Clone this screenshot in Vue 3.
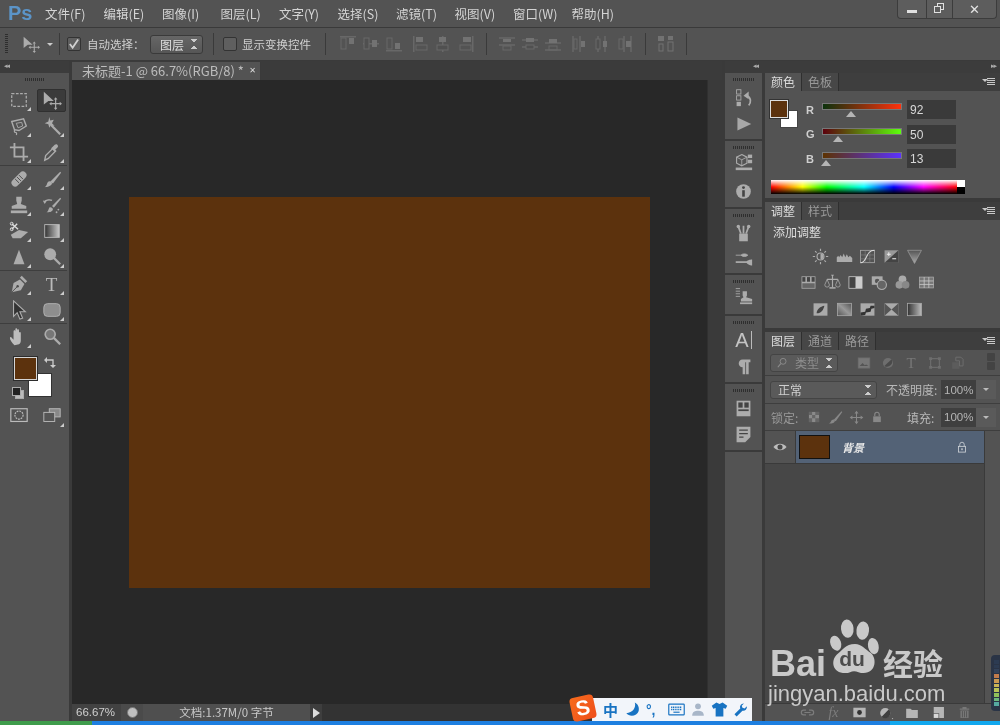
<script setup>
import { h } from 'vue'

const c = '#acacac'
const d = '#4a4a4a'
const icons = {
  marquee: `<rect x="3" y="4" width="16" height="14" fill="none" stroke="${c}" stroke-width="1.4" stroke-dasharray="3 1.6"/>`,
  move: `<path d="M2 2v14l5-4 6 0z" fill="${c}"/><path d="M15 10v10M10 15h10" stroke="${c}" stroke-width="1.3"/><path d="M15 8l2 2.5h-4zM15 22l2-2.5h-4zM8 15l2.5-2v4zM22 15l-2.5-2v4z" fill="${c}"/>`,
  lasso: `<path d="M3 6l13-3 3 8-8 5-5-1z" fill="none" stroke="${c}" stroke-width="1.6"/><path d="M8 8l6-1 1 4-5 2z" fill="none" stroke="${c}"/><path d="M7 15c-2 1-1 3 0 3s2 1 1 3" fill="none" stroke="${c}" stroke-width="1.3"/>`,
  wand: `<path d="M10 10l10 10" stroke="${c}" stroke-width="2.4"/><path d="M8 1l1 4 4-1-2 4 3 3-4-1-2 3-1-4-4-1 4-2z" fill="${c}"/>`,
  crop: `<path d="M6 1v15h15M1 6h15v15" fill="none" stroke="${c}" stroke-width="2"/>`,
  dropper: `<path d="M3 20l1-5 8-8 3 3-8 8z" fill="none" stroke="${c}" stroke-width="1.5"/><path d="M11 6l3-3c2-2 5 1 3 3l-3 3 1 1-1 1-4-4 1-1z" fill="${c}"/>`,
  heal: `<g transform="rotate(-45 11 11)"><rect x="1" y="7" width="20" height="8" rx="4" fill="${c}"/><path d="M8 8v6M11 8v6M14 8v6" stroke="${d}"/></g>`,
  brush: `<path d="M9 14L20 3l1 1L12 16z" fill="${c}"/><path d="M3 20c3 0 7-1 8-4 0-2-3-3-4-2-2 1-1 4-4 6z" fill="${c}"/>`,
  stamp: `<path d="M8 2h6v4l-1 4 6 2v3H3v-3l6-2-1-4z" fill="${c}"/><rect x="2" y="17" width="18" height="3" fill="${c}"/>`,
  hbrush: `<path d="M11 12L20 3l1 1-8 10z" fill="${c}"/><path d="M5 19c3 0 6 0 7-3 0-2-3-3-4-2-1 2-1 4-3 5z" fill="${c}"/><path d="M2 8c3-3 7-3 9-2" fill="none" stroke="${c}" stroke-width="1.5"/><path d="M1 6l2 4 2-3z" fill="${c}"/><circle cx="18" cy="16" r="1" fill="${c}"/><circle cx="16" cy="19" r="1" fill="${c}"/>`,
  eraser: `<path d="M2 15l9-5 10 2-8 7H4z" fill="${c}"/><path d="M3 3l7 6M9 3L3 9" stroke="#ddd" stroke-width="1.5"/><circle cx="3" cy="3" r="1.6" fill="none" stroke="#ddd"/><circle cx="3" cy="9" r="1.6" fill="none" stroke="#ddd"/>`,
  gradient: `<defs><linearGradient id="gr"><stop offset="0" stop-color="#333"/><stop offset="1" stop-color="#c8c8c8"/></linearGradient></defs><rect x="3" y="4" width="16" height="14" fill="url(#gr)" stroke="#bbb"/>`,
  blur: `<path d="M11 3l6 16H5z" fill="${c}"/>`,
  dodge: `<circle cx="9" cy="8" r="6.5" fill="${c}"/><path d="M13 12l7 7" stroke="${c}" stroke-width="2.5"/>`,
  pen: `<path d="M3 20l2-10 7-4 5 5-4 7z" fill="${c}"/><path d="M12 4l2-2 6 6-2 2z" fill="${c}"/><path d="M3 20l6-6" stroke="${d}"/><circle cx="9.5" cy="13.5" r="1.3" fill="${d}"/>`,
  arrow: `<path d="M5 1v17l4-4 3 7 3-1-3-7h6z" fill="#333" stroke="${c}" stroke-width="1.2"/>`,
  round: `<rect x="2" y="4" width="18" height="14" rx="4" fill="#8e8e8e" stroke="#b4b4b4"/>`,
  hand: `<path d="M6 20c-3-3-5-6-5-8s2-1 3 1l1 1V5c0-2 2-2 2 0v4-6c0-2 2-2 2 0v6-5c0-2 2-2 2 0v6-3c0-2 2-2 2 0v8c0 2-1 3-2 4z" fill="#bcbcbc"/>`,
  zoom: `<circle cx="9" cy="8" r="5.5" fill="#777" stroke="${c}" stroke-width="1.8"/><path d="M13 12l7 7" stroke="${c}" stroke-width="2.6"/>`,
  qmask: `<rect x="2" y="3" width="18" height="14" fill="none" stroke="#bbb" stroke-width="1.3"/><circle cx="11" cy="10" r="4.5" fill="none" stroke="#bbb" stroke-width="1.3" stroke-dasharray="2 1"/>`,
  screen: `<rect x="8" y="3" width="12" height="9" fill="#888" stroke="#bbb"/><rect x="2" y="7" width="12" height="10" fill="#555" stroke="#bbb"/>`,
  history: `<rect x="3" y="2" width="5" height="5" fill="none" stroke="${c}"/><rect x="3" y="9" width="5" height="5" fill="none" stroke="${c}"/><rect x="3" y="16" width="5" height="5" fill="${c}"/><path d="M17 20c3-3 3-9-2-11" fill="none" stroke="${c}" stroke-width="2"/><path d="M11 9l6-5v9z" fill="${c}"/>`,
  play: `<path d="M4 4l16 7.500L4 19z" fill="#a8a8a8"/>`,
  cube3d: `<path d="M9 3l6 3v7l-6 3-6-3V6z" fill="none" stroke="${c}" stroke-width="1.3"/><path d="M3 6l6 3 6-3M9 9v7" stroke="${c}" fill="none"/><rect x="16" y="3" width="5" height="4" fill="${c}"/><rect x="16" y="9" width="5" height="4" fill="${c}"/><rect x="2" y="18" width="19" height="3" fill="${c}"/>`,
  info: `<circle cx="11" cy="11" r="8.500" fill="${c}"/><circle cx="11" cy="6.500" r="1.700" fill="#444"/><rect x="9.500" y="9.500" width="3" height="7.500" fill="#444"/>`,
  brushes: `<path d="M6 11h10v9H6z" fill="${c}"/><path d="M8 11L5 3M11 11V2M14 11l3-8" stroke="${c}" stroke-width="2"/><circle cx="5" cy="3" r="2" fill="${c}"/><circle cx="17" cy="3" r="2" fill="${c}"/>`,
  presets: `<path d="M2 6h6c2-2 6-2 8 0-2 2-6 2-8 0" fill="${c}" stroke="${c}"/><rect x="2" y="13" width="13" height="2" fill="${c}"/><path d="M14 14c2-3 6-3 7-3v7c-1 0-5 0-7-4z" fill="${c}"/>`,
  clone: `<path d="M10 6h5v5l-1 2 7 2v3H8v-3l3-2-1-2z" fill="${c}"/><rect x="7" y="19" width="14" height="2" fill="${c}"/><path d="M2 3h5M2 6h5M2 9h5M2 12h5" stroke="${c}"/>`,
  para: `<path d="M9 3h10v3h-2v14h-3V6h-1v14h-3v-8c-6 0-6-9 0-9z" fill="${c}"/>`,
  layout: `<rect x="3" y="2" width="16" height="18" fill="${c}"/><rect x="5" y="4" width="5" height="6" fill="#444"/><rect x="12" y="4" width="5" height="6" fill="#444"/><rect x="5" y="12" width="12" height="2" fill="#444"/>`,
  note: `<path d="M3 2h16v12l-6 6H3z" fill="${c}"/><path d="M6 6h10M6 10h10M6 14h5" stroke="#444" stroke-width="1.500"/>`,
  sun: `<circle cx="11" cy="11" r="4.500" fill="none" stroke="${c}" stroke-width="1.500"/><path d="M11 7a4 4 0 010 8z" fill="${c}"/><path d="M11 1v3M11 18v3M1 11h3M18 11h3M4 4l2 2M16 16l2 2M4 18l2-2M16 6l2-2" stroke="${c}" stroke-width="1.500"/>`,
  levels: `<path d="M1 18V12l2-2 1 2 2-3 2 3 2-5 2 5 2-4 2 4 2-2 3 3v5z" fill="${c}"/>`,
  curves: `<rect x="2" y="3" width="18" height="16" fill="none" stroke="${c}"/><path d="M2 9h18M2 14h18M8 3v16M14 3v16" stroke="#888" stroke-width=".7"/><path d="M2 19c9 0 6-16 18-16" fill="none" stroke="#ddd" stroke-width="1.300"/>`,
  expo: `<rect x="2" y="3" width="18" height="16" fill="#999"/><path d="M2 19L20 3v16z" fill="#444"/><path d="M5 8h5M7.500 5.500v5M12 14h5" stroke="#eee" stroke-width="1.300"/>`,
  vib: `<defs><linearGradient id="vb" x1="0" y1="0" x2="0" y2="1"><stop offset="0" stop-color="#555"/><stop offset="1" stop-color="#aaa"/></linearGradient></defs><path d="M2 3h18l-9 17z" fill="url(#vb)" stroke="#999"/>`,
  hue: `<rect x="2" y="3" width="18" height="16" fill="#aaa"/><rect x="3" y="4" width="4" height="6" fill="#444"/><rect x="9" y="4" width="4" height="6" fill="#444"/><rect x="15" y="4" width="4" height="6" fill="#444"/><rect x="3" y="12" width="16" height="6" fill="#666"/>`,
  balance: `<path d="M11 3v14M4 7h14" stroke="${c}" stroke-width="1.500"/><path d="M7 17h8v2H7z" fill="${c}"/><path d="M1 14l3-7 3 7a3 3 0 01-6 0zM15 14l3-7 3 7a3 3 0 01-6 0z" fill="none" stroke="${c}"/><path d="M9 1h4l-2 3z" fill="${c}"/>`,
  bw: `<rect x="2" y="3" width="18" height="16" fill="#ccc"/><rect x="3" y="4" width="8" height="14" fill="#444"/>`,
  photo: `<rect x="1" y="3" width="14" height="11" fill="#aaa"/><circle cx="8" cy="9" r="3" fill="#555"/><circle cx="14" cy="14" r="6" fill="#666" stroke="#aaa" stroke-width="1.500"/>`,
  mixer: `<circle cx="11" cy="7" r="5" fill="#aaa"/><circle cx="7" cy="14" r="5" fill="#999"/><circle cx="15" cy="14" r="5" fill="#888"/>`,
  lookup: `<rect x="2" y="4" width="18" height="14" fill="#777" stroke="#aaa"/><path d="M2 9h18M2 13.500h18M8 4v14M14 4v14" stroke="#ccc"/>`,
  invert: `<rect x="2" y="3" width="18" height="16" fill="#aaa"/><path d="M6 16c0-6 5-9 10-10-1 5-4 10-10 10z" fill="#444"/>`,
  poster: `<defs><linearGradient id="pt" x1="0" y1="1" x2="1" y2="0"><stop offset="0" stop-color="#555"/><stop offset=".5" stop-color="#999"/><stop offset="1" stop-color="#555"/></linearGradient></defs><rect x="2" y="3" width="18" height="16" fill="url(#pt)" stroke="#aaa"/>`,
  thresh: `<rect x="2" y="3" width="18" height="16" fill="#aaa"/><path d="M2 19v-4l6-1 1-4 5-1 1-3h5v3l-4 1-1 4-6 1-1 3z" fill="#333"/>`,
  select: `<rect x="2" y="3" width="18" height="16" fill="#aaa"/><path d="M2 3l9 8-9 8zM20 3l-9 8 9 8z" fill="#555"/>`,
  gmap: `<defs><linearGradient id="gm"><stop offset="0" stop-color="#333"/><stop offset="1" stop-color="#bbb"/></linearGradient></defs><rect x="2" y="3" width="18" height="16" fill="url(#gm)" stroke="#aaa"/>`,
  fimg: `<rect x="3" y="4" width="16" height="14" fill="#777" stroke="#6c6c6c"/><path d="M5 15l4-4 3 3 2-1 3 2z" fill="#555"/>`,
  fadj: `<circle cx="11" cy="11" r="7" fill="#6e6e6e"/><path d="M6 15L16 6a7 7 0 01-10 9z" fill="#4a4a4a"/>`,
  fshape: `<rect x="5" y="5" width="12" height="12" fill="none" stroke="#6e6e6e" stroke-width="1.500"/><path d="M3 3h4v4H3zM15 3h4v4h-4zM3 15h4v4H3zM15 15h4v4h-4z" fill="#6e6e6e"/>`,
  fsmart: `<rect x="3" y="10" width="10" height="9" fill="#5c5c5c"/><path d="M8 3h7l3 3v9h-5V8H8z" fill="none" stroke="#6e6e6e" stroke-width="1.300"/>`,
  checker: `<rect x="3" y="3" width="16" height="16" fill="#8a8a8a"/><path d="M3 3h5v5H3zM13 3h6v5h-6zM8 8h5v5H8zM3 13h5v6H3zM13 13h6v6h-6z" fill="#666"/>`,
  lbrush: `<path d="M9 15L20 3l1 1-9 13z" fill="#888"/><path d="M2 20c3 0 8 0 9-4-1-2-3-2-4-1-2 1-1 4-5 5z" fill="#888"/>`,
  lmove: `<path d="M11 4v14M4 11h14" stroke="#888" stroke-width="1.500"/><path d="M11 1l3 4H8zM11 21l3-4H8zM1 11l4-3v6zM21 11l-4-3v6z" fill="#888"/>`,
  lock: `<rect x="5" y="10" width="12" height="9" fill="#888"/><path d="M7.500 10V7a3.500 3.500 0 017 0v3" fill="none" stroke="#888" stroke-width="1.800"/>`,
  lockw: `<rect x="5.500" y="10" width="11" height="9" fill="none" stroke="#cfd3d8" stroke-width="1.300"/><path d="M7.500 10V7a3.500 3.500 0 017 0v3" fill="none" stroke="#cfd3d8" stroke-width="1.300"/><rect x="10" y="13" width="2" height="3" fill="#cfd3d8"/>`,
  eye: `<path d="M2 11c5-6 13-6 18 0-5 6-13 6-18 0z" fill="#bdbdbd"/><circle cx="11" cy="11" r="3.500" fill="#444"/>`,
  link: `<path d="M9 8H6a3 3 0 000 6h3M13 8h3a3 3 0 010 6h-3M7 11h8" fill="none" stroke="#7d7d7d" stroke-width="1.500"/>`,
  mask: `<rect x="2" y="4" width="18" height="14" fill="#b6b6b6"/><circle cx="11" cy="11" r="3.500" fill="#333"/>`,
  fill: `<circle cx="10" cy="11" r="7" fill="#b6b6b6"/><path d="M5 16L15 6a7 7 0 01-10 10z" fill="#3f3f3f"/><path d="M19 18l2 0-1 2z" fill="#b6b6b6"/>`,
  folder: `<path d="M3 5h6l2 2h8v11H3z" fill="#b6b6b6"/>`,
  newl: `<path d="M4 3h15v16h-7v-7H4z" fill="#b6b6b6"/><rect x="4" y="13" width="7" height="6" fill="#d8d8d8"/>`,
  trash: `<path d="M4 5h14v2H4zM8 3h6v2H8z" fill="#787878"/><path d="M5 8h12v11H5z" fill="#787878"/><path d="M8 9v9M11 9v9M14 9v9" stroke="#4a4a4a"/>`,
  search: `<circle cx="12" cy="9" r="5" fill="none" stroke="#8e8e8e" stroke-width="1.500"/><path d="M8 13l-5 6" stroke="#8e8e8e" stroke-width="1.800"/>`,
  moon: `<path d="M14 2c2 7-3 13-11 14 4 5 14 4 16-3 1-5-1-9-5-11z" fill="#1873c2"/>`,
  keyboard: `<rect x="1" y="4" width="20" height="14" rx="1" fill="none" stroke="#1873c2" stroke-width="1.500"/><path d="M4 8h14M4 11h14" stroke="#1873c2" stroke-width="2" stroke-dasharray="1.500 .8"/><path d="M7 14.500h8" stroke="#1873c2" stroke-width="1.500"/>`,
  person: `<circle cx="11" cy="6" r="4" fill="#a8b6c8"/><path d="M3 19c0-6 4-7 8-7s8 1 8 7z" fill="#a8b6c8"/>`,
  shirt: `<path d="M7 2l4 2 4-2 6 4-2 4-3-1v11H6V9l-3 1-2-4z" fill="#1873c2"/>`,
  wrench: `<path d="M15 2a5 5 0 00-5 7L2 17l3 3 8-8a5 5 0 006-6l-3 3-3-1-1-3 3-3z" fill="#1873c2"/>`,
  paw: `<ellipse cx="21" cy="11" rx="6.500" ry="9.500" transform="rotate(-6 21 11)" fill="#c9c9c9"/><ellipse cx="37" cy="13" rx="6.500" ry="9.500" transform="rotate(6 37 13)" fill="#c9c9c9"/><ellipse cx="9" cy="26" rx="5.500" ry="8" transform="rotate(-20 9 26)" fill="#c9c9c9"/><ellipse cx="48" cy="29" rx="5.500" ry="8.500" transform="rotate(-12 48 29)" fill="#c9c9c9"/><path d="M29 27c7 0 11 6 16 9 7 5 6 21-7 21-4 0-7-2-10-2s-5 2-9 2c-14 0-15-13-9-19 6-4 9-11 19-11z" fill="#c9c9c9"/>`
}
const Ic = (props) => h('svg', { width: props.s || 20, height: props.s || 20, viewBox: '0 0 22 22', innerHTML: icons[props.n] })
Ic.props = ['n', 's']

const ac = '#686868'
const af = '#727272'
const alignRects = {
  a1: `<rect x="1" y="1" width="16" height="1.500" fill="${ac}"/><rect x="2" y="3" width="5" height="11" fill="none" stroke="${ac}"/><rect x="10" y="3" width="5" height="6" fill="${af}"/>`,
  a2: `<rect x="1" y="8" width="16" height="1.500" fill="${ac}"/><rect x="2" y="3" width="5" height="11" fill="#505050" stroke="${ac}"/><rect x="10" y="5" width="5" height="7" fill="${af}"/>`,
  a3: `<rect x="1" y="15" width="16" height="1.500" fill="${ac}"/><rect x="2" y="3" width="5" height="11" fill="none" stroke="${ac}"/><rect x="10" y="8" width="5" height="6" fill="${af}"/>`,
  a4: `<rect x="2" y="1" width="1.500" height="16" fill="${ac}"/><rect x="5" y="2" width="7" height="5" fill="${af}"/><rect x="5" y="10" width="11" height="5" fill="none" stroke="${ac}"/>`,
  a5: `<rect x="8" y="1" width="1.500" height="16" fill="${ac}"/><rect x="5" y="2" width="7" height="5" fill="${af}"/><rect x="3" y="10" width="11" height="5" fill="#505050" stroke="${ac}"/>`,
  a6: `<rect x="15" y="1" width="1.500" height="16" fill="${ac}"/><rect x="6" y="2" width="8" height="5" fill="${af}"/><rect x="3" y="10" width="11" height="5" fill="none" stroke="${ac}"/>`,
  d1: `<path d="M1 3h16M1 10h16" stroke="${ac}" stroke-width="1.500"/><rect x="5" y="4" width="8" height="3" fill="${af}"/><rect x="5" y="11" width="8" height="4" fill="none" stroke="${ac}"/>`,
  d2: `<path d="M1 5h16M1 12h16" stroke="${ac}" stroke-width="1.500"/><rect x="5" y="3" width="8" height="4" fill="${af}"/><rect x="5" y="10" width="8" height="4" fill="#505050" stroke="${ac}"/>`,
  d3: `<path d="M1 8h16M1 15h16" stroke="${ac}" stroke-width="1.500"/><rect x="5" y="4" width="8" height="4" fill="${af}"/><rect x="5" y="11" width="8" height="4" fill="none" stroke="${ac}"/>`,
  d4: `<path d="M3 1v16M10 1v16" stroke="${ac}" stroke-width="1.500"/><rect x="4" y="4" width="3" height="10" fill="none" stroke="${ac}"/><rect x="11" y="6" width="4" height="6" fill="${af}"/>`,
  d5: `<path d="M5 1v16M12 1v16" stroke="${ac}" stroke-width="1.500"/><rect x="3" y="4" width="4" height="10" fill="#505050" stroke="${ac}"/><rect x="10" y="6" width="4" height="6" fill="${af}"/>`,
  d6: `<path d="M8 1v16M15 1v16" stroke="${ac}" stroke-width="1.500"/><rect x="3" y="4" width="4" height="10" fill="none" stroke="${ac}"/><rect x="10" y="6" width="5" height="6" fill="${af}"/>`,
  auto: `<rect x="1" y="1" width="6" height="5" fill="${af}"/><rect x="11" y="1" width="5" height="4" fill="${af}"/><rect x="2" y="9" width="4" height="7" fill="none" stroke="${af}"/><rect x="11" y="7" width="5" height="9" fill="none" stroke="${af}"/>`
}
const Al = (props) => h('svg', { width: 18, height: 18, viewBox: '0 0 18 18', innerHTML: alignRects[props.n] })
Al.props = ['n']

const menus = ['文件(F)', '编辑(E)', '图像(I)', '图层(L)', '文字(Y)', '选择(S)', '滤镜(T)', '视图(V)', '窗口(W)', '帮助(H)']
const alignGroups = [['a1', 'a2', 'a3'], ['a4', 'a5', 'a6'], null, ['d1', 'd2', 'd3'], ['d4', 'd5', 'd6'], null, ['auto']]
const toolGroups = [
  [['marquee', 1], ['move', 0, 1], ['lasso', 1], ['wand', 1], ['crop', 1], ['dropper', 1]],
  [['heal', 1], ['brush', 1], ['stamp', 1], ['hbrush', 1], ['eraser', 1], ['gradient', 1], ['blur', 1], ['dodge', 1]],
  [['pen', 1], ['T', 1], ['arrow', 1], ['round', 1]]
]
const dock = [
  ['history', 'play'], ['cube3d', 'info'], ['brushes', 'presets'], ['clone'], ['A', 'para'], ['layout', 'note']
]
const sliders = [
  { l: 'R', v: 92, pos: 24, bg: 'linear-gradient(to right,#0c320d,#ff320d)' },
  { l: 'G', v: 50, pos: 11, bg: 'linear-gradient(to right,#5c000d,#5cff0d)' },
  { l: 'B', v: 13, pos: -1, bg: 'linear-gradient(to right,#5c3200,#5c32ff)' }
]
const adjRows = [
  ['sun', 'levels', 'curves', 'expo', 'vib'],
  ['hue', 'balance', 'bw', 'photo', 'mixer', 'lookup'],
  ['invert', 'poster', 'thresh', 'select', 'gmap']
]
const meter = ['#2c3b52', '#2c3b52', '#33425a', '#c27b4c', '#c99a52', '#c9b455', '#b8c456', '#8fc05a', '#6cb77d', '#55a8a0']
</script>

<template>
  <div class="app">
    <header class="menubar">
      <span class="ps">Ps</span>
      <nav class="menus"><span v-for="m in menus" :key="m" class="menu">{{ m }}</span></nav>
      <div class="winbtns">
        <span class="wb wb1"><i class="minus"></i></span>
        <span class="wb wb2"><i class="sq a"></i><i class="sq b"></i></span>
        <span class="wb wb3">✕</span>
      </div>
    </header>

    <section class="options">
      <span class="grip"></span>
      <Ic n="move" :s="18" class="opt-move" />
      <span class="caret"></span>
      <span class="vsep s1"></span>
      <span class="check on"><svg width="13" height="13" viewBox="0 0 13 13"><path d="M2 6l3 4 6-9" fill="none" stroke="#d0d0d0" stroke-width="2"/></svg></span>
      <span class="otext t1">自动选择：</span>
      <span class="opt-select">图层<span class="updown"></span></span>
      <span class="vsep s2"></span>
      <span class="check off"></span>
      <span class="otext t2">显示变换控件</span>
      <span class="vsep s3"></span>
      <template v-for="(g, i) in alignGroups" :key="i">
        <span v-if="!g" class="vsep s4"></span>
        <span v-else class="agroup"><Al v-for="n in g" :key="n" :n="n" /></span>
      </template>
      <span class="vsep s5"></span>
    </section>

    <main class="work">
      <aside class="toolbar">
        <div class="collapse"><span class="dbl">◂◂</span></div>
        <div class="tgrip"></div>
        <div v-for="(g, gi) in toolGroups" :key="gi" class="tgroup">
          <div v-for="t in g" :key="t[0]" class="tool" :class="{ corner: t[1], active: t[2] }">
            <span v-if="t[0] === 'T'" class="tglyph">T</span>
            <Ic v-else :n="t[0]" />
          </div>
        </div>
        <div class="tgroup last">
          <div class="tool corner"><Ic n="hand" /></div>
          <div class="tool"><Ic n="zoom" /></div>
        </div>
        <div class="swatches">
          <span class="sw bgc"></span>
          <span class="sw fgc"></span>
          <svg class="swap" width="13" height="13" viewBox="0 0 13 13"><path d="M2 4h8v7" fill="none" stroke="#ccc" stroke-width="1.300"/><path d="M4 1v6L1 4zM7 9h6l-3 3z" fill="#ccc"/></svg>
          <span class="mini m2"></span><span class="mini m1"></span>
        </div>
        <div class="tgroup bottom">
          <div class="tool"><Ic n="qmask" /></div>
          <div class="tool corner"><Ic n="screen" /></div>
        </div>
      </aside>

      <section class="doc">
        <div class="tabbar">
          <div class="doctab">未标题-1 @ 66.7%(RGB/8) * <span class="tabx">✕</span></div>
        </div>
        <div class="docbody">
          <div class="canvas-wrap"><div class="canvas"></div></div>
          <div class="vscroll"></div>
        </div>
        <div class="status">
          <span class="zoomv">66.67%</span>
          <span class="sicon"><i></i></span>
          <span class="sinfo">文档:1.37M/0 字节</span>
          <span class="sarrow"></span>
        </div>
      </section>

      <aside class="dock">
        <div class="docktop"><span class="dbl left">◂◂</span><span class="dbl right">▸▸</span></div>
        <div class="dockbody">
          <div class="iconcol">
            <div v-for="(s, i) in dock" :key="i" class="dsec">
              <div class="dgrip"></div>
              <div v-for="n in s" :key="n" class="dicon">
                <span v-if="n === 'A'" class="aglyph">A<i></i></span>
                <Ic v-else :n="n" :s="19" />
              </div>
            </div>
          </div>

          <div class="panels">
            <section class="panel color">
              <div class="ptabs"><span class="ptab on">颜色</span><span class="ptab">色板</span><span class="pmenu"></span></div>
              <div class="color-body">
                <div class="color-top">
                  <div class="pswatch"><span class="pbg"></span><span class="pfg"></span></div>
                  <div class="sliders">
                    <div v-for="s in sliders" :key="s.l" class="srow">
                      <b>{{ s.l }}</b>
                      <div class="strack-wrap">
                        <div class="strack" :style="{ background: s.bg }"></div>
                        <span class="thumb" :style="{ left: s.pos + 'px' }"></span>
                      </div>
                      <span class="sval">{{ s.v }}</span>
                    </div>
                  </div>
                </div>
                <div class="spectrum"><div class="hue"></div><div class="bwcol"></div></div>
              </div>
            </section>

            <section class="panel adjust">
              <div class="ptabs"><span class="ptab on">调整</span><span class="ptab">样式</span><span class="pmenu"></span></div>
              <div class="adj-title">添加调整</div>
              <div v-for="(r, i) in adjRows" :key="i" class="adj-row">
                <Ic v-for="n in r" :key="n" :n="n" :s="17" />
              </div>
            </section>

            <section class="panel layers">
              <div class="ptabs"><span class="ptab on">图层</span><span class="ptab">通道</span><span class="ptab">路径</span><span class="pmenu"></span></div>
              <div class="lrow r1">
                <span class="lselect s-a"><Ic n="search" :s="13" /><em>类型</em><span class="updown"></span></span>
                <span class="ficons"><Ic n="fimg" :s="16" /><Ic n="fadj" :s="16" /><span class="ft">T</span><Ic n="fshape" :s="16" /><Ic n="fsmart" :s="16" /></span>
                <span class="ftoggle"><i></i><i></i></span>
              </div>
              <div class="lrow r2">
                <span class="lselect s-b">正常<span class="updown"></span></span>
                <span class="ltext op">不透明度:</span>
                <span class="lnum">100%<i></i></span>
              </div>
              <div class="lrow r3">
                <span class="ltext lk">锁定:</span>
                <span class="lockicons"><Ic n="checker" :s="14" /><Ic n="lbrush" :s="16" /><Ic n="lmove" :s="15" /><Ic n="lock" :s="14" /></span>
                <span class="ltext fl">填充:</span>
                <span class="lnum">100%<i></i></span>
              </div>
              <div class="lbody">
                <div class="llist">
                  <div class="layer">
                    <span class="eye"><Ic n="eye" :s="16" /></span>
                    <span class="lthumbcell">
                      <span class="lthumb"></span>
                      <span class="lname">背景</span>
                      <Ic n="lockw" :s="14" class="llock" />
                    </span>
                  </div>
                </div>
                <div class="lscroll"></div>
              </div>
              <div class="lbar">
                <Ic n="link" :s="17" />
                <span class="fx">fx</span>
                <Ic n="mask" :s="15" />
                <Ic n="fill" :s="16" />
                <Ic n="folder" :s="16" />
                <Ic n="newl" :s="15" />
                <Ic n="trash" :s="15" />
              </div>
            </section>
          </div>
        </div>
      </aside>
    </main>

    <footer class="taskbar"><span class="tgreen"></span><span class="tblue"></span><span class="tcyan"></span></footer>

    <div class="ime">
      <span class="sogou">S</span>
      <span class="imebar">
        <span class="zh">中</span>
        <Ic n="moon" :s="17" />
        <span class="punct">°,</span>
        <Ic n="keyboard" :s="17" />
        <Ic n="person" :s="16" />
        <Ic n="shirt" :s="17" />
        <Ic n="wrench" :s="16" />
      </span>
    </div>

    <div class="baidu">
      <div class="bline">
        <span class="bai">Bai</span>
        <span class="pawbox">
          <svg width="56" height="60" viewBox="0 0 58 60" v-html="icons.paw"></svg>
          <span class="du">du</span>
        </span>
        <span class="jy">经验</span>
      </div>
      <div class="burl">jingyan.baidu.com</div>
    </div>

    <div class="meter"><i v-for="(m, i) in meter" :key="i" :style="{ background: m }"></i></div>
  </div>
</template>

<style>
html, body { margin: 0; background: #535353; }
</style>

<style scoped>
.app {
  position: relative; width: 1000px; height: 725px; overflow: hidden;
  display: flex; flex-direction: column; background: #535353; color: #d0d0d0;
  font: 12px "Noto Sans CJK SC", "Liberation Sans", sans-serif;
  filter: blur(.3px);
}
.menubar { height: 28px; box-sizing: border-box; flex: none; display: flex; align-items: center; background: #535353; border-bottom: 1px solid #3a3a3a; position: relative; }
.ps { width: 45px; padding-left: 8px; box-sizing: border-box; font: bold 20px "Liberation Sans", sans-serif; color: #5b94c8; }
.menus { display: flex; gap: 15.500px; }
.menu { width: 43px; white-space: nowrap; font-size: 12.500px; color: #d4d4d4; }
.winbtns { position: absolute; right: 3px; top: 0; height: 19px; width: 100px; display: flex; background: #5d5d5d; border: 1px solid #3c3c3c; border-top: 0; border-radius: 0 0 4px 4px; box-sizing: border-box; }
.wb { display: flex; align-items: center; justify-content: center; position: relative; color: #e4e4e4; font-weight: bold; font-size: 13px; font-family: "DejaVu Sans", sans-serif; }
.wb + .wb { border-left: 1px solid #3c3c3c; }
.wb1 { width: 28px; } .wb2 { width: 25px; } .wb3 { flex: 1; }
.minus { width: 10px; height: 3px; background: #e0e0e0; margin-top: 4px; }
.sq { position: absolute; width: 7px; height: 7px; border: 1.500px solid #e0e0e0; box-sizing: border-box; }
.sq.a { left: 10px; top: 3px; } .sq.b { left: 7px; top: 6px; background: #5d5d5d; }

.options { height: 33px; box-sizing: border-box; flex: none; display: flex; align-items: center; background: #535353; border-bottom: 1px solid #3a3a3a; }
.grip { width: 3px; height: 20px; margin-left: 5px; background: repeating-linear-gradient(to bottom, #2e2e2e 0 1px, transparent 1px 2px); }
.opt-move { margin-left: 14px; }
.caret { margin-left: 7px; border: 3px solid transparent; border-top: 3px solid #ccc; border-bottom: 0; }
.vsep { width: 1px; height: 22px; background: #3a3a3a; flex: none; }
.s1 { margin-left: 6px; }
.check { width: 12px; height: 12px; margin-left: 7px; border: 1px solid #333; border-radius: 2px; background: #5f5f5f; display: flex; align-items: center; justify-content: center; flex: none; }
.otext { color: #d0d0d0; white-space: nowrap; font-size: 11.500px; }
.t1 { margin-left: 6px; width: 63px; }
.opt-select { width: 53px; height: 19px; box-sizing: border-box; padding-left: 9px; border: 1px solid #3a3a3a; border-radius: 3px; background: linear-gradient(#666, #565656); display: flex; align-items: center; position: relative; color: #ddd; }
.updown { position: absolute; right: 5px; top: 50%; margin-top: -5px; width: 6px; height: 10px; background:
  linear-gradient(to top right, transparent 50%, #ccc 50%) left 0 / 3px 4px no-repeat,
  linear-gradient(to top left, transparent 50%, #ccc 50%) right 0 / 3px 4px no-repeat,
  linear-gradient(to bottom right, transparent 50%, #ccc 50%) left bottom / 3px 4px no-repeat,
  linear-gradient(to bottom left, transparent 50%, #ccc 50%) right bottom / 3px 4px no-repeat; }
.s2 { margin-left: 10px; }
.check.off { margin-left: 9px; }
.t2 { margin-left: 5px; width: 70px; }
.s3 { margin-left: 13px; }
.agroup { display: flex; gap: 5px; margin-left: 13px; }
.agroup + .agroup { margin-left: 8px; }
.s4 { margin-left: 11px; }
.s4 + .agroup { margin-left: 11px; }
.s5 { margin-left: 11px; }

.work { flex: 1; min-height: 0; display: flex; }
.toolbar { width: 72px; flex: none; border-right: 3px solid #3a3a3a; box-sizing: border-box; display: flex; flex-direction: column; background: #535353; }
.collapse, .docktop { height: 12px; flex: none; background: #3c3c3c; position: relative; }
.dbl { position: absolute; top: 0; left: 4px; font: 7px/11px "DejaVu Sans", sans-serif; color: #aaa; letter-spacing: -1px; }
.tgrip { height: 3px; margin: 5px 25px 6px; background: repeating-linear-gradient(to right, #2e2e2e 0 1px, transparent 1px 2px); flex: none; }
.tgroup { display: grid; grid-template-columns: 33px 33px; grid-auto-rows: 26px; padding: 0 0 0 2px; border-bottom: 1px solid #3e3e3e; margin-right: 2px; }
.tgroup.last, .tgroup.bottom { border: 0; }
.tool { display: flex; align-items: center; justify-content: center; position: relative; }
.tool.active { background: #3b3b3b; border: 1px solid #303030; border-radius: 2px; box-sizing: border-box; height: 23px; align-self: center; margin: 0 2px; }
.tool.corner::after { content: ""; position: absolute; right: 4px; bottom: 2px; border: 2px solid transparent; border-right-color: #ccc; border-bottom-color: #ccc; }
.tglyph { font: 19px/1 "Liberation Serif", serif; color: #bbb; }
.swatches { position: relative; height: 50px; flex: none; }
.sw { position: absolute; box-sizing: border-box; border: 1px solid #222; }
.fgc { left: 14px; top: 7px; width: 23px; height: 23px; background: #5c320d; border: 1px solid #d5d5d5; box-shadow: 0 0 0 1px #2c2c2c; }
.bgc { left: 28px; top: 23px; width: 24px; height: 24px; background: #fff; border-color: #333; }
.swap { position: absolute; left: 43px; top: 6px; }
.mini { position: absolute; width: 7px; height: 7px; border: 1px solid #aaa; }
.m1 { left: 12px; top: 37px; background: #222; }
.m2 { left: 15px; top: 40px; background: #bbb; }
.tgroup.bottom { margin-top: 3px; }

.doc { flex: 1; min-width: 0; display: flex; flex-direction: column; width: 650px; }
.tabbar { height: 19px; flex: none; background: #3b3b3b; display: flex; }
.doctab { width: 189px; box-sizing: border-box; background: #535353; padding-left: 10px; margin-top: 1px; color: #bdbdbd; font-size: 13px; line-height: 18px; white-space: nowrap; border-right: 1px solid #3a3a3a; position: relative; }
.tabx { position: absolute; right: 4px; font: 8px/18px "DejaVu Sans", sans-serif; color: #ddd; }
.docbody { flex: 1; min-height: 0; display: flex; background: #282828; }
.canvas-wrap { flex: 1; padding: 117px 0 0 57px; box-sizing: border-box; }
.canvas { width: 521px; height: 391px; background: #5c320d; }
.vscroll { width: 14px; background: #3a3a3a; border-left: 1px solid #303030; }
.status { height: 17px; flex: none; display: flex; align-items: center; background: #333; color: #c8c8c8; font-size: 11.500px; }
.zoomv { width: 49px; padding-left: 4px; box-sizing: border-box; font-family: "Liberation Sans", sans-serif; color: #cfcfcf; height: 100%; line-height: 17px; background: #424242; }
.sicon { width: 22px; height: 100%; background: #4a4a4a; display: flex; align-items: center; justify-content: center; }
.sicon i { width: 9px; height: 9px; border-radius: 50%; background: #c0c0c0; border: 1px solid #777; }
.sinfo { width: 167px; height: 100%; background: #4f4f4f; text-align: center; line-height: 17px; white-space: nowrap; }
.sarrow { width: 12px; height: 100%; background: #3e3e3e; position: relative; }
.sarrow::after { content: ""; position: absolute; left: 3px; top: 4px; border: 5px solid transparent; border-left: 7px solid #ddd; border-right: 0; }

.dock { width: 278px; flex: none; display: flex; flex-direction: column; border-left: 3px solid #3a3a3a; box-sizing: border-box; }
.dbl.left { left: 28px; } .dbl.right { left: auto; right: 4px; }
.dockbody { flex: 1; min-height: 0; display: flex; background: #535353; }
.iconcol { width: 37px; flex: none; background: #535353; border-right: 3px solid #3a3a3a; }
.dsec { border-bottom: 2px solid #3a3a3a; padding-top: 5px; height: 68px; box-sizing: border-box; }
.dsec:nth-child(4) { height: 41px; }
.dsec:nth-child(3) { height: 66px; }
.dsec:nth-child(4) .dicon { margin-top: -4px; }
.dgrip { height: 3px; margin: 0 8px 3px; background: repeating-linear-gradient(to right, #2e2e2e 0 1px, transparent 1px 2px); }
.dicon { height: 26px; display: flex; align-items: center; justify-content: center; }
.dsec:nth-child(2) .dicon:nth-child(2) { margin-top: -4px; }
.dsec:nth-child(2) .dicon:nth-child(3) { margin-top: 4px; }
.aglyph { font: 20px/1 "Liberation Sans", sans-serif; color: #c4c4c4; display: flex; align-items: center; }
.aglyph i { width: 1px; height: 18px; background: #bbb; margin-left: 2px; }
.panels { flex: 1; min-width: 0; display: flex; flex-direction: column; background: #3a3a3a; gap: 4px; }
.panel { background: #535353; display: flex; flex-direction: column; }
.ptabs { height: 18px; flex: none; display: flex; background: #3e3e3e; position: relative; box-sizing: border-box; }
.ptab { width: 36px; text-align: center; line-height: 17px; color: #999; font-size: 12px; border-right: 1px solid #2f2f2f; background: #474747; }
.ptab.on { background: #535353; color: #dcdcdc; }
.pmenu { position: absolute; right: 5px; top: 5px; width: 8px; height: 7px; background: repeating-linear-gradient(to bottom, #c8c8c8 0 1px, transparent 1px 2px); }
.pmenu::before { content: ""; position: absolute; left: -5px; top: 1px; border: 3px solid transparent; border-top-color: #c8c8c8; border-bottom: 0; }

.color { height: 125px; flex: none; }
.color-body { padding: 9px 5px 0 5px; }
.color-top { display: flex; }
.pswatch { width: 29px; height: 29px; position: relative; flex: none; }
.pfg { position: absolute; left: 0; top: 0; width: 18px; height: 18px; background: #5c320d; border: 1px solid #ddd; box-shadow: 0 0 0 1px #333; box-sizing: border-box; }
.pbg { position: absolute; left: 10px; top: 10px; width: 18px; height: 18px; background: #fff; border: 1px solid #444; box-sizing: border-box; }
.sliders { margin-left: 7px; display: flex; flex-direction: column; gap: 5px; }
.srow { display: flex; align-items: center; height: 19.500px; }
.srow b { width: 16px; font: bold 11px "Liberation Sans", sans-serif; color: #cfcfcf; }
.strack-wrap { width: 80px; height: 19px; position: relative; margin-right: 5px; }
.strack { height: 5px; margin-top: 3px; border: 1px solid #777; box-sizing: content-box; }
.thumb { position: absolute; top: 11px; width: 0; height: 0; border: 5px solid transparent; border-bottom: 6px solid #b5b5b5; border-top: 0; }
.sval { width: 49px; height: 19px; background: #3a3a3a; font: 12px/20px "Liberation Sans", sans-serif; padding-left: 3px; box-sizing: border-box; color: #d8d8d8; }
.spectrum { display: flex; height: 14px; margin: 11px 0 0 1px; width: 194px; }
.hue { flex: 1; background: linear-gradient(to bottom, #fff 0, rgba(255,255,255,0) 50%, rgba(0,0,0,0) 50%, #000 100%), linear-gradient(to right, #f00, #ff0 17%, #0f0 30%, #0ff 50%, #00f 66%, #f0f 82%, #f00 100%); }
.bwcol { width: 8px; background: linear-gradient(#fff 50%, #000 50%); }

.adjust { height: 126px; flex: none; }
.adj-title { padding: 3px 0 0 8px; line-height: 17px; font-size: 12px; color: #dedede; height: 20px; }
.adj-row { display: flex; justify-content: center; gap: 6.500px; height: 26.500px; align-items: center; padding-right: 30px; box-sizing: border-box; }

.layers { flex: 1; min-height: 0; }
.lrow { display: flex; align-items: center; position: relative; padding-left: 5px; border-bottom: 1px solid #3e3e3e; flex: none; box-sizing: border-box; color: #aaa; }
.r1 { height: 26px; } .r2 { height: 28px; } .r3 { height: 27px; }
.lselect { position: relative; display: flex; align-items: center; box-sizing: border-box; height: 18px; border: 1px solid #444; border-radius: 3px; background: #5a5a5a; flex: none; }
.s-a { width: 68px; padding-left: 5px; color: #8e8e8e; }
.s-a em { font-style: normal; margin-left: 6px; }
.s-b { width: 107px; padding-left: 7px; color: #cfcfcf; }
.ficons { display: flex; align-items: center; gap: 7.500px; margin-left: 18px; }
.ft { width: 16px; text-align: center; font: 15px/16px "Liberation Serif", serif; color: #777; }
.ftoggle { position: absolute; right: 5px; top: 3px; width: 8px; height: 17px; display: flex; flex-direction: column; gap: 1px; }
.ftoggle i { flex: 1; background: #434343; border-radius: 1px; }
.ltext { font-size: 12px; color: #b8b8b8; white-space: nowrap; }
.op { margin-left: 9px; width: 55px; }
.lnum { display: flex; align-items: center; height: 19px; width: 55px; background: #3f3f3f; box-sizing: border-box; padding-left: 3px; font: 11.500px "Liberation Sans", sans-serif; color: #b5b5b5; position: relative; }
.lnum i { position: absolute; right: 0; top: 0; width: 20px; height: 19px; background: #5a5a5a; }
.lnum i::after { content: ""; position: absolute; left: 7px; top: 8px; border: 3px solid transparent; border-top-color: #bbb; border-bottom: 0; }
.lk { margin-left: 1px; width: 36px; color: #999; }
.lockicons { display: flex; align-items: center; gap: 6px; width: 100px; }
.fl { width: 34px; }
.lbody { flex: 1; min-height: 0; display: flex; background: #474747; }
.llist { flex: 1; }
.layer { display: flex; height: 33px; border-bottom: 1px solid #3a3a3a; box-sizing: border-box; }
.eye { width: 30px; display: flex; align-items: center; justify-content: center; background: #535353; border-right: 1px solid #3a3a3a; flex: none; }
.lthumbcell { flex: 1; display: flex; align-items: center; background: #536276; position: relative; }
.lthumb { width: 31px; height: 24px; margin-left: 3px; background: #5c320d; border: 1px solid #111; box-sizing: border-box; }
.lname { margin-left: 12px; font-style: italic; font-size: 11px; color: #e8e8e8; font-weight: bold; }
.llock { position: absolute; right: 15px; top: 9px; }
.lscroll { width: 15px; background: #535353; border-left: 1px solid #3a3a3a; flex: none; }
.lbar { height: 18px; flex: none; background: #535353; border-top: 1px solid #3a3a3a; display: grid; grid-template-columns: repeat(7, 26.300px); justify-items: center; align-items: center; padding-left: 29px; box-sizing: border-box; }
.fx { font: italic 14px "Liberation Serif", serif; color: #7d7d7d; }

.taskbar { height: 4px; flex: none; display: flex; }
.tgreen { width: 92px; background: #3f9c4c; }
.tblue { width: 798px; background: #1e7fe0; }
.tcyan { flex: 1; background: #12a8ef; }

.ime { position: absolute; left: 570px; top: 695px; width: 182px; height: 26px; display: flex; align-items: flex-end; }
.sogou { position: absolute; left: 1px; top: 1px; width: 24px; height: 24px; background: linear-gradient(135deg, #f76b1c, #ee4f1c); border-radius: 4px; transform: rotate(-12deg); color: #fff; font: bold 21px/24px "Liberation Sans", sans-serif; text-align: center; z-index: 1; }
.imebar { margin-left: 22px; flex: 1; height: 23px; background: #f2f5fa; display: flex; align-items: center; gap: 5px; padding-left: 11px; box-sizing: border-box; }
.zh { color: #1873c2; font-size: 15px; font-weight: bold; width: 16px; line-height: 1; }
.punct { color: #1873c2; font: bold 14px/1 "Liberation Sans", sans-serif; width: 17px; }

.baidu { position: absolute; left: 768px; top: 617px; color: #c9c9c9; }
.bline { display: flex; align-items: flex-end; height: 62px; }
.bai { font: bold 36px/30px "Liberation Sans", sans-serif; width: 62px; padding-left: 2px; box-sizing: border-box; }
.pawbox { position: relative; width: 54px; height: 62px; margin-left: -3px; }
.pawbox svg { position: absolute; left: 0; top: 0; }
.du { position: absolute; left: 8px; top: 30px; width: 34px; text-align: center; font: bold 21px/24px "Liberation Sans", sans-serif; color: #4c4c4c; }
.jy { font-size: 30px; line-height: 34px; font-weight: bold; margin-left: 2px; white-space: nowrap; }
.burl { font: 22px/26px "Liberation Sans", sans-serif; margin-top: 2px; white-space: nowrap; }

.meter { position: absolute; right: 0; top: 655px; width: 9px; height: 56px; background: #2a3446; border-radius: 4px 0 0 4px; display: flex; flex-direction: column; gap: 1px; padding: 5px 1px 5px 3px; box-sizing: border-box; }
.meter i { flex: 1; }
</style>
